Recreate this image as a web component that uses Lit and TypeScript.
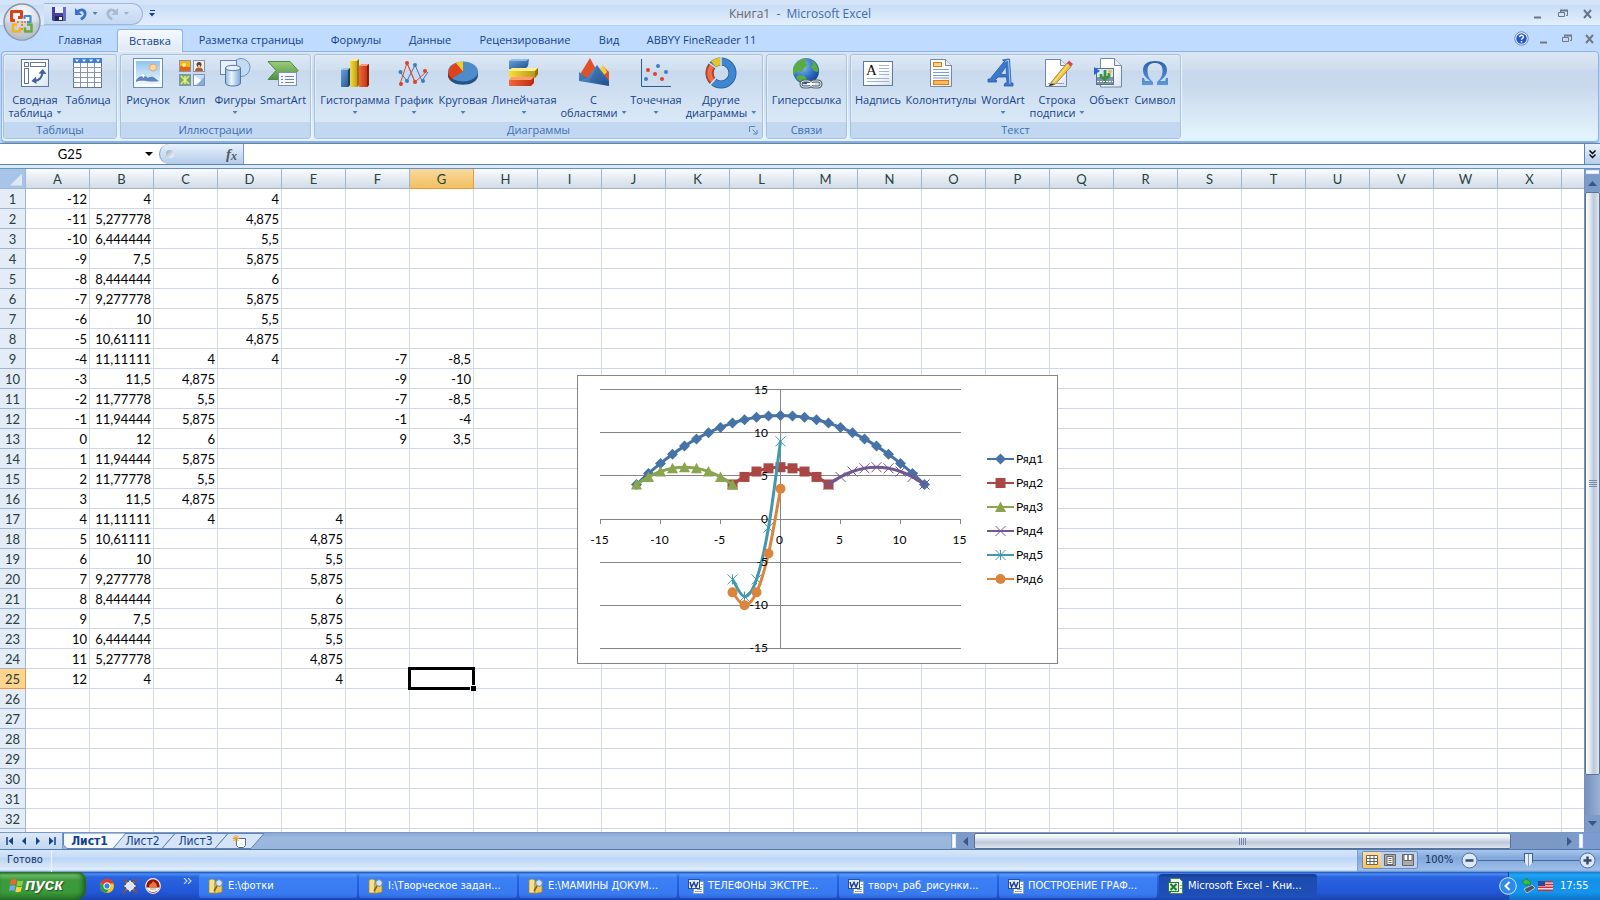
import { LitElement, html, css, svg, nothing } from "lit";
import { customElement } from "lit/decorators.js";
import { classMap } from "lit/directives/class-map.js";

type Point = [number, number];

/* The trailing blank column and row carry the grid on to the scroll bars. */
const COLUMNS = [..."ABCDEFGHIJKLMNOPQRSTUVWX".split(""), ""];
const ROWS: (number | "")[] = [...Array.from({ length: 32 }, (_, i) => i + 1), ""];
const ACTIVE = { col: "G", row: 25 };

const span = (from: number, to: number) =>
  Array.from({ length: to - from + 1 }, (_, i) => from + i);

const bigArc = span(-12, 12).map((x): Point => [x, 12 - (x * x) / 18]);
const smallArc = (centre: number) =>
  span(centre - 4, centre + 4).map((x): Point => [x, 6 - (x - centre) ** 2 / 8]);
const handle1 = [-7, -9, -7, -1, 9];
const handle2 = [-8.5, -10, -8.5, -4, 3.5];

const cells = new Map<string, string>();
const put = (col: string, firstRow: number, values: number[]) =>
  values.forEach((v, i) =>
    cells.set(col + (firstRow + i), String(Number(v.toPrecision(7))).replace(".", ","))
  );
put("A", 1, bigArc.map((p) => p[0]));
put("B", 1, bigArc.map((p) => p[1]));
put("C", 9, smallArc(0).map((p) => p[1]));
put("D", 1, smallArc(-8).map((p) => p[1]));
put("E", 17, smallArc(8).map((p) => p[1]));
put("F", 9, handle1);
put("G", 9, handle2);

const series = [
  { name: "Ряд1", color: "#4572a7", marker: "diamond", points: bigArc },
  { name: "Ряд2", color: "#aa4643", marker: "square", points: smallArc(0) },
  { name: "Ряд3", color: "#89a54e", marker: "triangle", points: smallArc(-8) },
  { name: "Ряд4", color: "#71588f", marker: "cross", points: smallArc(8) },
  { name: "Ряд5", color: "#4198af", marker: "star", points: handle1.map((y, i): Point => [i - 4, y]) },
  { name: "Ряд6", color: "#db843d", marker: "circle", points: handle2.map((y, i): Point => [i - 4, y]) },
];

/* ---------- icons ---------- */

const defs = svg`<defs>
  <linearGradient id="bl" x1="0" y1="0" x2="1" y2="1"><stop offset="0" stop-color="#6ba6dc"/><stop offset="1" stop-color="#1f4f8f"/></linearGradient>
  <linearGradient id="ye" x1="0" y1="0" x2="1" y2="0"><stop offset="0" stop-color="#f7df3c"/><stop offset="1" stop-color="#b58d10"/></linearGradient>
  <linearGradient id="rd" x1="0" y1="0" x2="1" y2="0"><stop offset="0" stop-color="#f4673a"/><stop offset="1" stop-color="#b82c0c"/></linearGradient>
  <linearGradient id="cy" x1="0" y1="0" x2="1" y2="0"><stop offset="0" stop-color="#8db6e2"/><stop offset=".4" stop-color="#eef6fd"/><stop offset="1" stop-color="#7ba6d6"/></linearGradient>
  <linearGradient id="sk" x1="0" y1="0" x2="0" y2="1"><stop offset="0" stop-color="#8fc4ef"/><stop offset="1" stop-color="#eaf5fd"/></linearGradient>
  <linearGradient id="gr" x1="0" y1="0" x2="0" y2="1"><stop offset="0" stop-color="#9ccc7c"/><stop offset="1" stop-color="#4f9140"/></linearGradient>
  <linearGradient id="om" x1="0" y1="0" x2="0" y2="1"><stop offset="0" stop-color="#2d62ad"/><stop offset="1" stop-color="#5c97dc"/></linearGradient>
  <radialGradient id="gl" cx=".35" cy=".3" r=".8"><stop offset="0" stop-color="#8fc5f5"/><stop offset=".6" stop-color="#2c6cc4"/><stop offset="1" stop-color="#123a86"/></radialGradient>
  <linearGradient id="pg" x1="0" y1="0" x2="1" y2="1"><stop offset=".5" stop-color="#fff"/><stop offset="1" stop-color="#d6e2f0"/></linearGradient>
</defs>`;

const page = svg`<path d="M7.5 1.500h14l7 7v21.500h-21z" fill="url(#pg)" stroke="#7388a5"/><path d="M21.500 1.500v7h7" fill="#e5eef8" stroke="#7388a5"/>`;

const icons: Record<string, unknown> = {
  pivot: svg`<rect x="2.500" y="2.500" width="27" height="27" fill="url(#pg)" stroke="#60789b"/>
    <rect x="5.500" y="5.500" width="4" height="4" fill="#fff" stroke="#60789b"/><rect x="11.500" y="5.500" width="15" height="4" fill="#fff" stroke="#60789b"/><rect x="5.500" y="11.500" width="4" height="15" fill="#fff" stroke="#60789b"/>
    <path d="M14 23.500c6 1 9-3 9.500-8" fill="none" stroke="#3b62a0" stroke-width="2.200"/><path d="M19.500 16.500l4.200-4.500 3.800 5zM17 19.500l-4.500 4.500 5 3z" fill="#3b62a0"/>`,
  table: svg`<rect x="1.500" y="1.500" width="28" height="29" fill="#fff" stroke="#5f7699"/><path d="M1 1h29v5H1z" fill="#3f7fd6"/>
    <path d="M3 2.500h4l-2 2.500zM10 2.500h4l-2 2.500zM17 2.500h4l-2 2.500zM24 2.500h4l-2 2.500z" fill="#fff"/>
    <path d="M1 10.500h29M1 15.500h29M1 20.500h29M1 25.500h29M8.500 6v24M15.500 6v24M22.500 6v24" stroke="#8596ae" fill="none"/>`,
  picture: svg`<rect x="1.500" y="1.500" width="29" height="29" fill="#f8fbff" stroke="#6c8eb5"/><rect x="4" y="4" width="24" height="22" fill="url(#sk)"/>
    <circle cx="21" cy="10.500" r="3.500" fill="#ffd9a8" stroke="#f59d51"/><path d="M4 23l7-7 5 5 3-3 9 7v1H4z" fill="#5a86bd"/><path d="M11 16l-4 4 3-1 1.500 2 1-2 2 1zM19 18l-2 2 3-.5 2 1z" fill="#fff"/><path d="M4 25c6-3 14 1 24-1v3H4z" fill="#eaf3fb"/>`,
  clip: svg`<g stroke="#8195b2"><rect x="3.500" y="3.500" width="11" height="11" fill="#f9b11c"/><rect x="17.500" y="3.500" width="11" height="11" fill="#f3ede4"/><rect x="3.500" y="17.500" width="11" height="11" fill="#69ad72"/><rect x="17.500" y="17.500" width="11" height="11" fill="#c9dcf6"/></g>
    <path d="M4 10c4-3 7 1 10 0v4H4z" fill="#e4650f"/><circle cx="8" cy="8" r="2" fill="#fff07b"/><circle cx="23" cy="7.500" r="2.500" fill="#5b4436"/><path d="M19 14c0-5 8-5 8 0z" fill="#b55b36"/><path d="M23 8v3" stroke="#e8b78f" stroke-width="2"/>
    <path d="M5 19l8 8M13 19l-8 8M9 19v8" stroke="#f5ea79" stroke-width="1.500"/><path d="M18 18l8 6-8 4z" fill="#fff"/><path d="M21 28l7-8v8z" fill="#86a9df"/>`,
  shapes: svg`<circle cx="22" cy="10.500" r="9" fill="#c3daf3" stroke="#6e93c2"/><rect x="1.500" y="3.500" width="16" height="14" fill="#e7f1fb" stroke="#6983ab"/>
    <path d="M6.500 11v15c0 4 15 4 15 0V11z" fill="url(#cy)" stroke="#54779f"/><ellipse cx="14" cy="11" rx="7.500" ry="2.700" fill="#e4f0fb" stroke="#54779f"/>`,
  smartart: svg`<path d="M1 4.500h22l8 9-8 9H1l8-9z" fill="url(#gr)" stroke="#4d8b43"/><rect x="11.500" y="15.500" width="18" height="13" fill="#f4f8fc" stroke="#8294ac"/><path d="M14 19.500h2M18 19.500h9M14 22.500h2M18 22.500h9M14 25.500h2M18 25.500h9" stroke="#6f86a5"/>`,
  column: svg`<path d="M2 13l3-2h6v17l-2 2H2z" fill="url(#bl)"/><path d="M2 13l3-2h6l-2 2z" fill="#9bc6ea"/><path d="M20 9l3-2h7v21l-2 2h-8z" fill="url(#rd)"/><path d="M20 9l3-2h7l-2 2z" fill="#ff9a76"/>
    <path d="M11 4l3-2h6v26l-2 2h-7z" fill="url(#ye)"/><path d="M11 4l3-2h6l-2 2z" fill="#fff08c"/><path d="M18 4l2-2v26l-2 2z" fill="#96720a"/><path d="M28 9l2-2v21l-2 2z" fill="#8f1d04"/><path d="M9 13l2-2v17l-2 2z" fill="#173e70"/>`,
  line: svg`<path d="M2 15l7 9 8-16 7 16 6-9" fill="none" stroke="#3b73b6"/><path d="M2 27L9 6l8 19 12-11" fill="none" stroke="#d9502f"/><path d="M9 6l8 19" stroke="#d9502f"/>
    <g fill="#3d7cc3"><circle cx="2.500" cy="15" r="2"/><circle cx="9" cy="24" r="2"/><circle cx="17" cy="8" r="2"/><circle cx="25" cy="24" r="2"/></g><g fill="#dc4322"><circle cx="3" cy="27" r="2"/><circle cx="9" cy="6" r="2"/><circle cx="17" cy="25" r="2"/><circle cx="27" cy="14" r="2"/></g>`,
  pie: svg`<path d="M1 14v4c0 13 30 13 30 0v-4z" fill="#245487"/><ellipse cx="16" cy="14.500" rx="15" ry="10" fill="#4d8bc9"/><path d="M16 14.500V5C4 5-3 14 5 21.500z" fill="#e0431c"/><path d="M1 14v4c0 3 2 5 4 6v-3c-3-2-4-4-4-7z" fill="#9c2709"/><path d="M16 14.500V4.500c-3 0-5 .5-7 1.500z" fill="#f3cf25"/>`,
  bar: svg`<path d="M1 4l3-2h17l-1 7-3 3H1z" fill="url(#bl)"/><path d="M1 4l3-2h17l-3 2z" fill="#8fbde6"/><path d="M1 14l3-3h26v6l-3 4H1z" fill="url(#ye)"/><path d="M1 14l3-3h26l-3 3z" fill="#fff08c"/><path d="M27 14l3-3v6l-3 4z" fill="#93700a"/><path d="M1 23l3-3h22v6l-3 3H1z" fill="url(#rd)"/><path d="M1 23l3-3h22l-3 3z" fill="#ff9a76"/>`,
  area: svg`<path d="M1 19L12 1l8 15 6-6 5 5v13L1 23z" fill="#e0512a"/><path d="M22 12l3-4 4 7-3 3z" fill="#f2d131"/><path d="M1 15l8 6L19 8l12 16v5L1 24z" fill="url(#bl)"/><path d="M1 15v9l8-3zM19 8l-7 16 19 5z" fill="#215490" opacity=".35"/>`,
  scatter: svg`<path d="M1.500 2v27.500H31" fill="none" stroke="#2f5b93"/><g fill="#3f7cc0"><circle cx="6" cy="22" r="2"/><circle cx="18" cy="9" r="2"/><circle cx="26" cy="15" r="2"/></g><g fill="#dd4424"><circle cx="8" cy="13" r="2"/><circle cx="15" cy="17" r="2"/><circle cx="22" cy="22" r="2"/></g>`,
  donut: svg`<circle cx="16" cy="16" r="11.500" fill="none" stroke="#245892" stroke-width="8"/><circle cx="16" cy="16" r="11.500" fill="none" stroke="#3e86cf" stroke-width="6.500"/><path d="M8.200 24.500A11.500 11.500 0 0 1 7 9" fill="none" stroke="#c93a17" stroke-width="7.500"/><path d="M8.200 24.500A11.500 11.500 0 0 1 7 9" fill="none" stroke="#ef6d48" stroke-width="4.500"/><path d="M8.500 7.200A11.500 11.500 0 0 1 15.500 4.500" fill="none" stroke="#e8c421" stroke-width="7.500"/><path d="M4 6l7 5M16 0v9M5 28l6-7" stroke="#d5e2f2" stroke-width="1.500"/>`,
  link: svg`<circle cx="15" cy="14" r="13" fill="url(#gl)"/><path d="M4 8c3-5 9-7 12-6l-2 4 3 2-4 3-2 4-5-1-3 4c-2-4-1-8 1-10zM20 3c5 2 8 8 7 12l-4-1-3-4 2-3zM8 18l6 1 2 4-4 3c-4-1-6-4-7-6z" fill="#58ad3f"/>
    <g fill="none"><rect x="10" y="24" width="10" height="6" rx="3" stroke="#58616e" stroke-width="3"/><rect x="20" y="24" width="10" height="6" rx="3" stroke="#58616e" stroke-width="3"/><rect x="10" y="24" width="10" height="6" rx="3" stroke="#e3e8ee"/><rect x="20" y="24" width="10" height="6" rx="3" stroke="#e3e8ee"/><path d="M16 27h8" stroke="#fff" stroke-width="2"/></g>`,
  textbox: svg`<rect x="1.500" y="4.500" width="29" height="24" fill="url(#pg)" stroke="#64799a"/><text x="4" y="18" font-family="Liberation Serif, serif" font-size="15" fill="#111">A</text><path d="M17 8.500h10M17 11.500h10M17 14.500h10M17 17.500h10M5 21.500h22M5 24.500h22" stroke="#a3b4cf"/>`,
  header: svg`<path d="M5.500 2.500h15l6 6v21h-21z" fill="url(#pg)" stroke="#7388a5"/><path d="M20.500 2.500v6h6" fill="#e5eef8" stroke="#7388a5"/><rect x="8.500" y="5.500" width="8" height="4" fill="#ffd28e" stroke="#e27a12"/><rect x="8.500" y="23.500" width="15" height="4" fill="#ffb95c" stroke="#e27a12"/><path d="M8 12.500h16M8 15.500h16M8 18.500h16M8 21h16" stroke="#7f9cd0"/>`,
  wordart: svg`<path d="M1 22h2L17.500 4l-2-1 5.500-1h1.500l1.500 24h2v3h-9l1-3h2l-.5-6h-8L7.500 23h2v2H1zM13.500 17.500h6L19 9.500z" fill="#3a78cc" stroke="#2a5ca6" stroke-width=".8"/><path d="M18.500 4.500l3-1.500 1.500 24" fill="none" stroke="#a9cdf6"/>`,
  sign: svg`<path d="M4.500 2.500h15l6 6v21h-21z" fill="url(#pg)" stroke="#7388a5"/><path d="M19.500 2.500v6h6" fill="#e5eef8" stroke="#7388a5"/><path d="M10 25.500L26 6l4 3.500-16 18-6 1.500z" fill="#f3c443" stroke="#9b7420" stroke-width=".8"/><path d="M26 6l2-2.500 4 3.500-2 2.500z" fill="#d6455a"/><path d="M10.500 25.500l-2.500 3.500 5-1.500z" fill="#222"/><path d="M12 26L27.500 7.500" stroke="#ffe99c"/><path d="M7 26.500h16" stroke="#8fa2bd"/>`,
  object: svg`${page}<rect x="3.500" y="11.500" width="17" height="16" fill="#dbe9f5" stroke="#56728f"/><path d="M4 20h16v7H4z" fill="#7f93a7"/><path d="M1 10l6 4-6 4z" fill="#2d62d2"/><path d="M12 13v13M8 17v3l4 2 4-3v-3" fill="none" stroke="#3b9240" stroke-width="2.800"/><circle cx="17" cy="14.500" r="2" fill="#e4c15d"/><path d="M4 24.500h16" stroke="#fff" stroke-dasharray="2 1"/>`,
  omega: svg`<path d="M3 28v-7h2l1 3h5c-4-3-7-6-7-11C4 7 9 4 16 4s12 3 12 9c0 5-3 8-7 11h5l1-3h2v7H18v-3c4-3 5.500-7 5.500-12 0-4.500-3-7-7.500-7S8.500 8.500 8.500 13c0 5 1.500 9 5.500 12v3z" fill="url(#om)"/>`,
};

const icon = (name: string) =>
  html`<svg class="ico" viewBox="0 0 32 32" aria-hidden="true">${defs}${icons[name]}</svg>`;

interface Tool { icon: string; lines: string[]; menu?: boolean }
const groups: { cls: string; title: string; launcher?: boolean; tools: Tool[] }[] = [
  { cls: "g-tables", title: "Таблицы", tools: [
    { icon: "pivot", lines: ["Сводная", "таблица"], menu: true },
    { icon: "table", lines: ["Таблица"] } ] },
  { cls: "g-pics", title: "Иллюстрации", tools: [
    { icon: "picture", lines: ["Рисунок"] },
    { icon: "clip", lines: ["Клип"] },
    { icon: "shapes", lines: ["Фигуры"], menu: true },
    { icon: "smartart", lines: ["SmartArt"] } ] },
  { cls: "g-charts", title: "Диаграммы", launcher: true, tools: [
    { icon: "column", lines: ["Гистограмма"], menu: true },
    { icon: "line", lines: ["График"], menu: true },
    { icon: "pie", lines: ["Круговая"], menu: true },
    { icon: "bar", lines: ["Линейчатая"], menu: true },
    { icon: "area", lines: ["С", "областями"], menu: true },
    { icon: "scatter", lines: ["Точечная"], menu: true },
    { icon: "donut", lines: ["Другие", "диаграммы"], menu: true } ] },
  { cls: "g-links", title: "Связи", tools: [{ icon: "link", lines: ["Гиперссылка"] }] },
  { cls: "g-text", title: "Текст", tools: [
    { icon: "textbox", lines: ["Надпись"] },
    { icon: "header", lines: ["Колонтитулы"] },
    { icon: "wordart", lines: ["WordArt"], menu: true },
    { icon: "sign", lines: ["Строка", "подписи"], menu: true },
    { icon: "object", lines: ["Объект"] },
    { icon: "omega", lines: ["Символ"] } ] },
];

const uiFont = css`"Open Sans", "Noto Sans", sans-serif`;
const cellFont = css`Lato, "Open Sans", sans-serif`;
const sysFont = css`"DejaVu Sans Condensed", "DejaVu Sans", sans-serif`;

const reset = css`
  *, *::before, *::after { box-sizing: border-box; }
  button, input { font: inherit; color: inherit; border: 0; margin: 0; padding: 0; background: none; border-radius: 0; outline: none; }
  button { display: flex; align-items: center; justify-content: center; white-space: nowrap; }
  svg { display: block; flex: none; }
`;

/* ---------- title bar and ribbon ---------- */

@customElement("excel-ribbon")
export class ExcelRibbon extends LitElement {
  static styles = [reset, css`
    :host { display: block; position: relative; font: 11px/14px ${uiFont}; color: #15428b; background: #bfdbff; }
    .title { height: 26px; display: grid; grid-template-columns: 1fr auto 1fr; align-items: center; padding-top: 2px;
      background: linear-gradient(#d5e4f8 0 5px, #c8dcf6 5px, #e3effd 25px); border-bottom: 1px solid #b0d2ef; }
    .quick { display: flex; align-items: center; padding-left: 44px; }
    .qat { display: flex; align-items: center; width: 99px; height: 22px; padding-left: 7px;
      border: 1px solid #9db8dc; border-left: 0; border-radius: 0 11px 11px 0; background: linear-gradient(#dbe8f9, #c4d8f2); }
    .qat button { height: 16px; }
    .q16 { width: 16px; } .q12 { width: 12px; }
    .qat .q16 + .q16 { margin-left: 6px; }
    .qat .q12 + .q16 { margin-left: 3px; }
    .custom { margin-left: 3px; width: 12px; }
    .name { font-size: 12px; line-height: 18px; padding-top: 1px; color: #3e6aaa; white-space: pre; }
    .book { color: #696969; }
    .win { display: flex; justify-content: flex-end; gap: 9px; padding-right: 4px; }
    .win button { width: 16px; height: 16px; }
    .tabs { height: 25px; display: flex; justify-content: space-between; }
    .tablist { display: grid; grid-template-columns: 70px 70px 132px 78px 70px 120px 48px 137px; padding-left: 45px; }
    .tab { height: 22px; align-self: end; }
    .tab.on { margin: 0 2px -1px; height: 23px; border: 1px solid #8db2e3; border-bottom: 0; border-radius: 3px 3px 0 0;
      background: linear-gradient(#f4f9ff, #dfe9f5); box-shadow: 0 0 2px #fff inset; z-index: 1; }
    .tabs .win { align-items: center; gap: 7px; padding-right: 2px; }
    .panel { height: 91px; margin: 0 1px; padding: 2px 1px; display: flex; gap: 3px; border: 1px solid #8db2e3; border-radius: 4px;
      background: linear-gradient(#dbe6f4, #cfddec 17px, #c8d8ee 18px, #c9d9ec 35px, #e3f4fd 85px, #d9f3ff); box-shadow: 0 1px 1px #8aa5c8; }
    .group { flex: none; display: flex; flex-direction: column; border: 1px solid #a6c1dd; border-radius: 3px; box-shadow: 1px 1px 0 #eef7ff, inset 1px 1px 0 #e3edf8; overflow: hidden;
      background: linear-gradient(#dde8f5, #d0deee 15px, #c8d9ee 16px, #d9e8f6 66px); }
    .tools { flex: 1; display: grid; align-items: start; padding: 2px 2px 0; justify-content: start; }
    .g-tables { width: 114px; } .g-tables .tools { grid-template-columns: 58px 48px; }
    .g-pics { width: 191px; } .g-pics .tools { grid-template-columns: 50px 38px 48px 48px; }
    .g-charts { width: 449px; } .g-charts .tools { grid-template-columns: 76px 42px 56px 66px 73px 52px 78px; }
    .g-links { width: 81px; } .g-links .tools { grid-template-columns: 75px; }
    .g-text { width: 331px; } .g-text .tools { grid-template-columns: 50px 76px 48px 60px 44px 48px; }
    .tool { flex-direction: column; line-height: 13px; min-width: 0; }
    .ico { width: 32px; height: 32px; margin-bottom: 4px; }
    .line { display: flex; align-items: center; height: 13px; gap: 4px; }
    .down { width: 5px; height: 3px; background: #4f7fb8; clip-path: polygon(0 0, 100% 0, 50% 100%); }
    .cap { height: 16px; display: flex; align-items: center; justify-content: center; position: relative; color: #3e6db5; background: #c1d8f0; }
    .launch { position: absolute; right: 3px; top: 2px; width: 12px; height: 12px; }
    .orb { position: absolute; left: 3px; top: 3px; width: 38px; height: 38px; z-index: 2; }
  `];

  private windowButtons(color: string) {
    return html`
      <button aria-label="Свернуть"><svg width="16" height="16"><path d="M4 11.500h7" stroke=${color} stroke-width="2"/></svg></button>
      <button aria-label="Восстановить"><svg width="16" height="16" fill="none" stroke=${color}><path d="M5.500 6V4.500h7v5H11"/><path d="M5 4.500h8" stroke-width="2"/><path d="M3.500 6.500h6v4h-6z"/></svg></button>
      <button aria-label="Закрыть"><svg width="16" height="16"><path d="M4 4l7 8M11 4l-7 8" stroke=${color} stroke-width="2"/></svg></button>`;
  }

  render() {
    const tabs = ["Главная", "Вставка", "Разметка страницы", "Формулы", "Данные", "Рецензирование", "Вид", "ABBYY FineReader 11"];
    return html`
      <button class="orb" aria-label="Office">
        <svg width="38" height="38" viewBox="0 0 38 38">
          <defs><radialGradient id="o" cx=".5" cy=".3" r=".7"><stop offset="0" stop-color="#fff"/><stop offset=".6" stop-color="#dbe0e8"/><stop offset="1" stop-color="#a9b3c2"/></radialGradient></defs>
          <circle cx="19" cy="19" r="18" fill="url(#o)" stroke="#8795ab" stroke-width="1.500"/>
          <path d="M2 20a17 17 0 0 0 34 0c-10-3-24-3-34 0z" fill="#b9c2cf" opacity=".5"/>
          <g fill="none" stroke-linejoin="round">
            <path d="M12 17.500H8.500V8.500H18.500V14.500H15" stroke="#d8441a" stroke-width="3"/>
            <path d="M21.500 16v-3h6v6h-3.500" stroke="#3f8ad0" stroke-width="2.200"/>
            <path d="M14 21.500h-4v7h7v-4" stroke="#f6b21b" stroke-width="2.500"/>
            <path d="M24 21.500h4.500v7h-6.500v-4" stroke="#69a93a" stroke-width="2.500"/>
          </g>
          <g fill="#e8862e"><path d="M14 18h2v2h-2zM18 18h2v2h-2zM18 21h2v2h-2zM21 18h2v2h-2zM18 25h2v2h-2z"/></g>
        </svg>
      </button>
      <div class="title">
        <div class="quick">
          <div class="qat">
            <button class="q16" aria-label="Сохранить"><svg width="14" height="14" viewBox="0 0 14 14"><path d="M0 0h14v14H1l-1-1z" fill="#4440a0"/><path d="M3 0h8v6H3z" fill="#e8edf8"/><path d="M11 0h3v14h-3z" fill="#6a6ac6"/><path d="M3 9h8v5H3z" fill="#26235e"/><path d="M7 10h3v3H7z" fill="#fff"/></svg></button>
            <button class="q16" aria-label="Отменить"><svg width="14" height="14" viewBox="0 0 14 14"><path d="M3 5c4-4 9-2 8 3-.5 2-2 3-4 4.500" fill="none" stroke="#3b70cc" stroke-width="2.800"/><path d="M1 1v7h7z" fill="#3b70cc"/></svg></button>
            <button class="q12" aria-label="Список отмены"><span class="down"></span></button>
            <button class="q16" aria-label="Вернуть"><svg width="14" height="14" viewBox="0 0 14 14"><path d="M11 5C7 1 2 3 3 8c.5 2 2 3 4 4.500" fill="none" stroke="#a9bad3" stroke-width="2.800"/><path d="M13 1v7H6z" fill="#a9bad3"/></svg></button>
            <button class="q12" aria-label="Список возврата"><svg width="5" height="3"><path d="M0 0h5L2.500 3z" fill="#9fb0c9"/></svg></button>
          </div>
          <button class="custom" aria-label="Настройка панели"><svg width="7" height="7"><path d="M1 .5h5" stroke="#15428b"/><path d="M0 3h6L3 6.500z" fill="#15428b"/></svg></button>
        </div>
        <div class="name"><span class="book">Книга1</span>  -  Microsoft Excel</div>
        <div class="win">${this.windowButtons("#6a7587")}</div>
      </div>
      <div class="tabs">
        <div class="tablist" role="tablist">
          ${tabs.map((t, i) => html`<button role="tab" class=${classMap({ tab: true, on: i === 1 })}>${t}</button>`)}
        </div>
        <div class="win">
          <button aria-label="Справка"><svg width="15" height="15" viewBox="0 0 15 15"><circle cx="7.500" cy="7.500" r="6.700" fill="#fff" stroke="#5c86be"/><circle cx="7.500" cy="7.500" r="5.300" fill="#2458d0"/><path d="M5.600 6.200c0-2.600 4-2.400 3.800-.2 0 1.200-1.900 1.300-1.900 2.800M7.500 10v1.400" fill="none" stroke="#fff" stroke-width="1.400"/></svg></button>
          ${this.windowButtons("#727983")}
        </div>
      </div>
      <div class="panel">
        ${groups.map((g) => html`
          <section class="group ${g.cls}">
            <div class="tools">
              ${g.tools.map((t) => html`
                <button class="tool">
                  ${icon(t.icon)}
                  <span class="line">${t.lines[0]}</span>
                  <span class="line">${t.lines[1] ?? nothing}${t.menu ? html`<span class="down"></span>` : nothing}</span>
                </button>`)}
            </div>
            <div class="cap">${g.title}
              ${g.launcher ? html`<button class="launch" aria-label="Параметры диаграмм"><svg width="9" height="9" fill="none" stroke="#5d86b8"><path d="M.5 6V.5H6M3.500 3.500l4 4M8 4v4H4"/></svg></button>` : nothing}
            </div>
          </section>`)}
      </div>`;
  }
}

/* ---------- chart ---------- */

@customElement("sheet-chart")
export class SheetChart extends LitElement {
  static styles = [reset, css`
    :host { display: block; }
    .chart { background: #fff; font: 12px ${cellFont}; }
    text { fill: #000; }
  `];

  private px([x, y]: Point): Point {
    return [203.5 + x * 12, 144 - y * 8.63];
  }

  private curve(points: Point[]) {
    const p = points.map((q) => this.px(q));
    let d = `M${p[0]}`;
    for (let i = 0; i < p.length - 1; i++) {
      const a = p[Math.max(i - 1, 0)], b = p[i], c = p[i + 1], e = p[Math.min(i + 2, p.length - 1)];
      d += `C${b[0] + (c[0] - a[0]) / 6},${b[1] + (c[1] - a[1]) / 6} ${c[0] - (e[0] - b[0]) / 6},${c[1] - (e[1] - b[1]) / 6} ${c}`;
    }
    return d;
  }

  private marker(kind: string, color: string, [x, y]: Point) {
    const shapes: Record<string, string> = {
      diamond: "M0-5.500L5.500 0 0 5.500-5.500 0z",
      square: "M-5-5h10v10h-10z",
      triangle: "M0-5.500L5.500 5H-5.500z",
      cross: "M-5-5l10 10M5-5l-10 10",
      star: "M-5-5l10 10M5-5l-10 10M0-5V5",
      circle: "M-5 0a5 5 0 1 0 10 0a5 5 0 1 0-10 0",
    };
    const open = kind === "cross" || kind === "star";
    return svg`<path d=${shapes[kind]} transform="translate(${x} ${y})" fill=${open ? "none" : color} stroke=${open ? color : "none"}/>`;
  }

  render() {
    const ticks = [-15, -10, -5, 0, 5, 10, 15];
    return html`
      <svg class="chart" width="481" height="289" role="img" aria-label="Диаграмма">
        <rect x=".5" y=".5" width="480" height="288" fill="none" stroke="#868686"/>
        <g stroke="#868686" shape-rendering="crispEdges">
          ${ticks.map((t) => svg`<path d="M23 ${this.px([0, t])[1]}H384"/>`)}
          ${ticks.map((t) => svg`<path d="M${this.px([t, 0])[0]} 144v5"/>`)}
          <path d="M203.500 14V274"/>
        </g>
        ${series.map((s) => svg`
          <path d=${this.curve(s.points)} fill="none" stroke=${s.color} stroke-width="3"/>
          ${s.points.map((p) => this.marker(s.marker, s.color, this.px(p)))}`)}
        ${ticks.map((t) => svg`<text x="191" y=${this.px([0, t])[1] + 4} text-anchor="end">${t}</text>`)}
        ${ticks.map((t) => svg`<text x=${this.px([t, 0])[0] - 1} y="169" text-anchor="middle">${t}</text>`)}
        ${series.map((s, i) => svg`
          <path d="M410 ${84 + i * 24}h27" stroke=${s.color} stroke-width="2"/>
          ${this.marker(s.marker, s.color, [423.5, 84 + i * 24])}
          <text x="439" y=${88 + i * 24}>${s.name}</text>`)}
      </svg>`;
  }
}

/* ---------- sheet ---------- */

@customElement("excel-sheet")
export class ExcelSheet extends LitElement {
  static styles = [reset, css`
    :host { display: grid; grid-template: minmax(0, 1fr) 18px / minmax(0, 1fr) 16px; min-height: 0; }
    .view { position: relative; overflow: hidden; background: #fff; }
    .grid { table-layout: fixed; width: 1626px; border-collapse: separate; border-spacing: 0; font: 13px/18px ${cellFont}; color: #000; }
    .rowcol { width: 26px; }
    th, td { height: 20px; padding: 1px 2px 0; white-space: nowrap; border: solid #d0d7e5; border-width: 0 1px 1px 0; }
    td { text-align: right; position: relative; }
    th { font-weight: 400; text-align: center; color: #27413e; border-color: #9eb6ce; }
    thead th { background: linear-gradient(#f9fcfd, #d3dbe9); }
    tbody th { background: #e4ecf7; }
    thead .on { background: linear-gradient(#f9d99f, #f1c15f); border-color: #f29536; }
    tbody .on { background: #ffd58d; border-color: #f29536; }
    thead .corner { background: #a9c4e9; padding: 0; }
    .corner i { display: block; width: 12px; height: 12px; margin: 2px 0 0 10px; background: #dfe8f5; clip-path: polygon(100% 0, 100% 100%, 0 100%); }
    .sel { position: absolute; inset: -2px; border: 3px solid #000; z-index: 1; }
    .sel::after { content: ""; position: absolute; right: -4px; bottom: -4px; width: 6px; height: 6px; background: #000; border: solid #fff; border-width: 1px 0 0 1px; }
    .float { position: absolute; left: 577px; top: 206px; z-index: 2; }
    .vbar { display: flex; flex-direction: column; border-left: 1px solid #7792b8; background: linear-gradient(90deg, #8fa9d0, #a6bfe3); }
    .vbar button, .hbar button { flex: none; background: #7d9bc8; }
    .vbar .split-h { height: 6px; background: #fff; border: 1px solid #7fa0cd; box-shadow: inset 0 0 0 1px #dfeaf8; }
    .vbar .arrow { height: 17px; }
    .vthumb { flex: 583; border: 1px solid #5c7196; border-radius: 2px; background: linear-gradient(90deg, #fff, #e3e9f1 30%, #bcc9db 60%, #dfe6ef); display: grid; place-items: center; }
    .vrest { flex: 40; background: linear-gradient(90deg, #7591bd, #98b1d6); }
    .bottom { grid-column: 1 / -1; display: flex; align-items: stretch; min-width: 0; border-top: 1px solid #7a98c5; border-bottom: 1px solid #4f78ae; background: linear-gradient(#8aa8d4, #9db8df 30%, #9ab5dc); font: 12px/14px ${sysFont}; color: #15428b; }
    .nav { display: flex; width: 63px; background: linear-gradient(#dbe8f8, #c3d7f1); padding-left: 3px; border-right: 1px solid #7a98c5; }
    .nav button { width: 14px; }
    .left { flex: 1; display: flex; min-width: 0; }
    .tab { position: relative; width: 53px; z-index: 0; }
    .tab svg { position: absolute; left: -7px; top: 0; z-index: -1; }
    .tab.on { font-weight: 700; z-index: 1; }
    .tab.on svg { left: 0; }
    .tab.add { width: 34px; }
    .tab .new { position: static; z-index: 0; }
    .hbar { flex: none; width: 649px; display: flex; }
    .hbar .split-v { width: 6px; background: #fff; border: 1px solid #7fa0cd; box-shadow: inset 0 0 0 1px #dfeaf8; }
    .hbar .arrow { width: 17px; }
    .hthumb { flex: 537; border: 1px solid #5c7196; border-radius: 2px; background: linear-gradient(#fff, #e3e9f1 30%, #bcc9db 60%, #dfe6ef); display: grid; place-items: center; }
    .hrest { flex: 50; background: #7c99c5; }
    .end { width: 16px; background: #7c9bd0; }
  `];

  private tabShape(w: number, on = false) {
    return html`<svg width=${w + 14} height="16" aria-hidden="true"><path d=${on ? `M.5 0H${w + 13}L${w} 15.500H4L.5 12z` : `M13 .5H${w + 13}L${w} 15.500H0z`} fill=${on ? "#f4f9ff" : "#d5e4f7"} stroke="#5f82b5"/></svg>`;
  }

  render() {
    return html`
      <div class="view">
        <table class="grid">
          <colgroup><col class="rowcol">${COLUMNS.map(() => html`<col>`)}</colgroup>
          <thead><tr>
            <th class="corner"><i></i></th>
            ${COLUMNS.map((c) => html`<th scope="col" class=${classMap({ on: c === ACTIVE.col })}>${c}</th>`)}
          </tr></thead>
          <tbody>
            ${ROWS.map((r) => html`<tr>
              <th scope="row" class=${classMap({ on: r === ACTIVE.row })}>${r}</th>
              ${COLUMNS.map((c) => html`<td>${cells.get(c + r) ?? nothing}${c === ACTIVE.col && r === ACTIVE.row ? html`<div class="sel"></div>` : nothing}</td>`)}
            </tr>`)}
          </tbody>
        </table>
        <sheet-chart class="float"></sheet-chart>
      </div>
      <div class="vbar">
        <button class="split-h" aria-label="Разделить"></button>
        <button class="arrow" aria-label="Вверх"><svg width="9" height="5"><path d="M0 5h9L4.500 0z" fill="#3f5682"/></svg></button>
        <div class="vthumb"><svg width="8" height="8"><path d="M0 .5h8M0 2.500h8M0 4.500h8M0 6.500h8" stroke="#7688a5"/></svg></div>
        <div class="vrest"></div>
        <button class="arrow" aria-label="Вниз"><svg width="9" height="5"><path d="M0 0h9L4.500 5z" fill="#3f5682"/></svg></button>
      </div>
      <div class="bottom">
        <div class="left">
          <div class="nav">
            <button aria-label="Первый лист"><svg width="8" height="8"><path d="M1 0v8" stroke="#15428b" stroke-width="1.500"/><path d="M7 0v8L2.500 4z" fill="#15428b"/></svg></button>
            <button aria-label="Предыдущий лист"><svg width="8" height="8"><path d="M6 0v8L2 4z" fill="#15428b"/></svg></button>
            <button aria-label="Следующий лист"><svg width="8" height="8"><path d="M2 0v8l4-4z" fill="#15428b"/></svg></button>
            <button aria-label="Последний лист"><svg width="8" height="8"><path d="M7 0v8" stroke="#15428b" stroke-width="1.500"/><path d="M1 0v8l4.500-4z" fill="#15428b"/></svg></button>
          </div>
          <button class="tab on">${this.tabShape(50, true)}Лист1</button>
          <button class="tab">${this.tabShape(53)}Лист2</button>
          <button class="tab">${this.tabShape(53)}Лист3</button>
          <button class="tab add" aria-label="Вставить лист">${this.tabShape(36)}
            <svg class="new" width="15" height="13" viewBox="0 0 15 13"><path d="M4.500 3.500h9v7l-2 2h-5l-2-2z" fill="#fff" stroke="#4c6d9c"/><path d="M4 0v7M.5 3.500h7M1.500 1l5 5M6.500 1l-5 5" stroke="#f09a1d"/></svg></button>
        </div>
        <div class="hbar">
          <button class="split-v" aria-label="Ширина полосы"></button>
          <button class="arrow" aria-label="Влево"><svg width="5" height="9"><path d="M5 0v9L0 4.500z" fill="#3f5682"/></svg></button>
          <div class="hthumb"><svg width="8" height="7"><path d="M.5 0v7M2.500 0v7M4.500 0v7M6.500 0v7" stroke="#7688a5"/></svg></div>
          <div class="hrest"></div>
          <button class="arrow" aria-label="Вправо"><svg width="5" height="9"><path d="M0 0v9l5-4.500z" fill="#3f5682"/></svg></button>
          <button class="split-v" aria-label="Граница"></button>
          <div class="end"></div>
        </div>
      </div>`;
  }
}

/* ---------- taskbar ---------- */

const folder = html`<svg width="16" height="16" viewBox="0 0 16 16"><path d="M1 2l3-1 3 1v13H1z" fill="#f6e08a" stroke="#a5832a" stroke-width=".7"/><path d="M7 4l7-1v11l-7 1.500z" fill="#edc94f" stroke="#a5832a" stroke-width=".7"/><circle cx="11" cy="5" r="3.300" fill="#cfe6fb" stroke="#708aa8"/><path d="M9 8l-3 5" stroke="#7c6130" stroke-width="1.500"/></svg>`;
const word = html`<svg width="16" height="16" viewBox="0 0 16 16"><path d="M5.500 3.500h10v12h-10z" fill="#fff" stroke="#8aa0c8"/><path d="M9 9.500h5M9 11.500h5M7 13.500h7M13 6.500h2" stroke="#7f9bd0"/><rect x=".5" y="1.500" width="11" height="9" fill="#e8effb" stroke="#2b4fa0"/><path d="M2 4l1.500 5L6 4.500 8 9l2-5" fill="none" stroke="#1f4296" stroke-width="1.500"/></svg>`;
const excel = html`<svg width="16" height="16" viewBox="0 0 16 16"><path d="M2.500.5h9l3 3v12h-12z" fill="#f5fbf3" stroke="#4a8a4e"/><rect x=".5" y="4.500" width="10" height="9" fill="#e0f2dd" stroke="#2c7a36"/><path d="M2.500 6l6 6M8.500 6l-6 6" stroke="#1e7a2c" stroke-width="2"/><path d="M12 7.500h2M12 10.500h2" stroke="#7db082"/></svg>`;

@customElement("xp-taskbar")
export class XpTaskbar extends LitElement {
  static styles = [reset, css`
    :host { display: flex; height: 28px; color: #fff; font: 11px/14px ${sysFont};
      background: linear-gradient(#1f51b8, #4a8df0 2px, #2a63e0 5px, #2257d8 20px, #1b45b0); }
    .start { width: 86px; gap: 1px; padding: 0 14px 2px 0; border-radius: 0 8px 10px 0; font: italic bold 17px/22px "Liberation Sans", sans-serif; text-shadow: 1px 1px 1px #245020;
      background: linear-gradient(#2d7a2d, #6fbf6b 3px, #3c9a3c 8px, #3a9a3a 20px, #2a7a2a); box-shadow: inset -3px 0 5px #1c5c1c; }
    .quick { width: 113px; display: flex; align-items: center; gap: 7px; padding-left: 13px; }
    .quick .more { margin: -10px 0 0 15px; }
    .tasks { flex: 1; display: flex; gap: 2px; padding: 2px 0; min-width: 0; }
    .task { width: 158px; justify-content: flex-start; gap: 4px; padding-left: 9px; border-radius: 3px; background: linear-gradient(#5e9bff, #3c80f5 4px, #387af0 20px, #2e68dc); }
    .task.on { background: linear-gradient(#153a90, #1d4bb0 4px, #1e50b8); }
    .tray { width: 92px; display: flex; align-items: center; gap: 3px; position: relative; padding-left: 12px;
      background: linear-gradient(#1a7ad0, #1da8f4 3px, #1290e8 8px, #1496ee 20px, #0f6fc4); border-left: 1px solid #0a4aa0; }
    .hide { position: absolute; left: -10px; top: 5px; }
    .clock { margin-left: 4px; }
  `];

  render() {
    const tasks: [unknown, string][] = [
      [folder, "E:\\фотки"], [folder, "I:\\Творческое задан..."], [folder, "E:\\МАМИНЫ ДОКУМ..."],
      [word, "ТЕЛЕФОНЫ ЭКСТРЕ..."], [word, "творч_раб_рисунки..."], [word, "ПОСТРОЕНИЕ ГРАФ..."], [excel, "Microsoft Excel - Кни..."],
    ];
    return html`
      <button class="start"><svg width="15" height="15" viewBox="0 0 15 15"><path d="M2 2c2-1.500 4-1 5.500 0L6.500 7C5 6 3 6 1 7z" fill="#f2652a"/><path d="M8.500 2.500c2 1 4 1 6 0l-1.500 5c-2 1-4 1-5.500 0z" fill="#8cd04a"/><path d="M1 8c2-1 4-1 5.500 0l-1.200 5C4 12 2 12 0 13z" fill="#6ea9f5"/><path d="M7.500 8.500c2 1 4 1 5.500 0l-1.300 5c-2 1-4 1-5.500 0z" fill="#fbd13c"/></svg>пуск</button>
      <div class="quick">
        <button aria-label="Chrome"><svg width="16" height="16" viewBox="0 0 16 16"><circle cx="8" cy="8" r="7" fill="#f4c724"/><path d="M8 8L1.600 5A7 7 0 0 1 14.600 5.500H8z" fill="#dd3b2c"/><path d="M8 8L1.500 5.200A7 7 0 0 0 7.500 15l3-5z" fill="#2f9c45"/><circle cx="8" cy="8" r="3.200" fill="#3f7fe0" stroke="#fff"/></svg></button>
        <button aria-label="Download Master"><svg width="16" height="16" viewBox="0 0 16 16"><path d="M1 1l5 3 2-3 2 3 5-3-3 5 3 2-3 2 3 5-5-3-2 3-2-3-5 3 3-5-3-2 3-2z" fill="#dfe7f2" stroke="#2c3a5c" stroke-width=".8"/><path d="M1 1l4 4M15 1l-4 4M1 15l4-4M15 15l-4-4" stroke="#a8502c" stroke-width="1.300"/><circle cx="8" cy="8" r="3.500" fill="#dbe6f6"/></svg></button>
        <button aria-label="Nero"><svg width="16" height="16" viewBox="0 0 16 16"><circle cx="8" cy="8" r="7.300" fill="#8d1508" stroke="#f2ece6" stroke-width="1.200"/><path d="M1.500 9.500h13c-1 6-12 6-13 0z" fill="#f3f3f0"/><path d="M4 9c0-4 3-3 4-6 2 2 4 2 4 6z" fill="#f0742b"/><path d="M5 11h6" stroke="#b99"/></svg></button>
        <button class="more" aria-label="Ещё"><svg width="9" height="6" fill="none" stroke="#b8d3ff" stroke-width="1.200"><path d="M1 0l3 3-3 3M5 0l3 3-3 3"/></svg></button>
      </div>
      <div class="tasks">${tasks.map(([ic, t], i) => html`<button class=${classMap({ task: true, on: i === 6 })}>${ic}<span>${t}</span></button>`)}</div>
      <div class="tray">
        <button class="hide" aria-label="Показать значки"><svg width="18" height="18" viewBox="0 0 18 18"><circle cx="9" cy="9" r="8.300" fill="#2f8ae8" stroke="#cfe6ff"/><path d="M10.500 5L6.500 9l4 4" fill="none" stroke="#fff" stroke-width="2"/></svg></button>
        <svg width="14" height="16" viewBox="0 0 14 16"><path d="M3 11l8-4 3 3-8 5z" fill="#4b5768" stroke="#ccd5e0" stroke-width=".8"/><path d="M1 4l5-4v2c3 0 4 2 3 6-1-2-2-2-3-2v2z" fill="#42c034" stroke="#19721a" stroke-width=".6"/></svg>
        <svg width="15" height="12" viewBox="0 0 15 12"><path d="M0 1h15v10H0z" fill="#f3dcdc"/><path d="M0 1.700h15M0 4.500h15M0 7.300h15M0 10.200h15" stroke="#cf3038" stroke-width="1.400"/><path d="M0 1h7v5H0z" fill="#33498f"/></svg>
        <span class="clock">17:55</span>
      </div>`;
  }
}

/* ---------- application window ---------- */

@customElement("app-root")
export class AppRoot extends LitElement {
  static styles = [reset, css`
    :host { display: flex; flex-direction: column; height: 100vh; overflow: hidden; background: #bfdbff; }
    .bar { display: flex; height: 22px; margin-top: 1px; flex: none; border: solid #5a84b4; border-width: 1px 0; background: #fff; font: 13px/20px ${cellFont}; color: #000; }
    .namebox { width: 140px; text-align: center; }
    .drop { width: 18px; }
    .gap { width: 1px; }
    .fx { width: 85px; justify-content: space-between; padding: 0 6px; border: 1px solid #7a9bc6; border-width: 0 1px 0 1px; border-radius: 10px 0 0 10px; background: linear-gradient(#e9f2fc, #b3cbea); }
    .bead { width: 8px; height: 8px; border-radius: 50%; background: linear-gradient(135deg, #96a7bf, #fff); }
    .fxt { font: italic bold 15px/18px "Liberation Serif", serif; color: #545c68; }
    .fxt sub { font-size: 12px; line-height: 1px; vertical-align: -1px; }
    .formula { flex: 1; min-width: 0; padding: 0 4px; }
    .more { width: 16px; border-left: 1px solid #5a84b4; background: linear-gradient(#eaf2fb, #b5cdec); }
    .strip { height: 4px; flex: none; background: #dce9f8; border-bottom: 1px solid #6a93c4; }
    .sheet { flex: 1; }
    .status { height: 22px; flex: none; display: flex; align-items: center; font: 11px/14px ${sysFont}; color: #15305f;
      background: linear-gradient(#d7e6f9, #c6dcf8 7px, #b9d4f6 8px, #e1edfb 20px, #5e8ecb); }
    .ready { width: 52px; padding: 0 0 2px 7px; border-right: 1px solid #f0f7ff; align-self: stretch; display: flex; align-items: center; }
    .grow { flex: 1; border-right: 1px solid #7f9fce; align-self: stretch; }
    .right { display: flex; align-items: center; align-self: stretch; padding: 0 4px 2px 4px; background: linear-gradient(#a9c6ec, #82a8dc 8px, #9dbfe9 20px, #5e8ecb); }
    .views { display: flex; border: 1px solid #6b8ec2; border-radius: 2px; height: 18px; background: #bcd1ef; }
    .views button { width: 18px; }
    .views .on { background: linear-gradient(#fcdf9c, #fbc252); }
    .pct { width: 43px; padding-left: 7px; }
    .round { width: 17px; }
    .zoom { appearance: none; width: 101px; height: 16px; background: linear-gradient(#49699c, #49699c) center / 100% 1px no-repeat; }
    .zoom::-webkit-slider-thumb { appearance: none; width: 9px; height: 14px; background: linear-gradient(90deg, #3f5f93 1px, #e3edfa 1px 4px, #7b97c4 4px 5px, #e3edfa 5px 8px, #3f5f93 8px); border-top: 1px solid #3f5f93; clip-path: polygon(0 0, 100% 0, 100% 65%, 50% 100%, 0 65%); }
  `];

  render() {
    return html`
      <excel-ribbon></excel-ribbon>
      <div class="bar">
        <input class="namebox" aria-label="Имя" .value=${"G25"}>
        <button class="drop" aria-label="Список имён"><svg width="8" height="4"><path d="M0 0h8L4 4z"/></svg></button>
        <span class="gap"></span>
        <button class="fx" aria-label="Вставить функцию"><span class="bead"></span><span class="fxt">f<sub>x</sub></span></button>
        <input class="formula" aria-label="Строка формул">
        <button class="more" aria-label="Развернуть"><svg width="7" height="9" fill="none" stroke="#000" stroke-width="1.500"><path d="M.5.5l3 3 3-3M.5 4.500l3 3 3-3"/></svg></button>
      </div>
      <div class="strip"></div>
      <excel-sheet class="sheet"></excel-sheet>
      <div class="status">
        <span class="ready">Готово</span><span class="grow"></span>
        <div class="right">
          <div class="views">
            <button class="on" aria-label="Обычный"><svg width="12" height="10" fill="#fff" stroke="#666"><path d="M.5.5h11v9H.5zM.5 3.500h11M.5 6.500h11M4 .5v9M8 .5v9"/></svg></button>
            <button aria-label="Разметка"><svg width="12" height="12" fill="#fff" stroke="#666"><path d="M.5.5h11v11H.5z" fill="#aaa"/><path d="M3 2.500h6v8H3zM4.500 4.500h3M4.500 6.500h3M4.500 8.500h3"/></svg></button>
            <button aria-label="Страничный"><svg width="12" height="12" fill="#fff" stroke="#666"><path d="M.5.5h11v11H.5z" fill="#aaa"/><path d="M2 .5h4v6H2zM6 .5h4v6H6z"/></svg></button>
          </div>
          <label class="pct" for="zoom">100%</label>
          <button class="round" aria-label="Мельче"><svg width="17" height="17"><circle cx="8.500" cy="8.500" r="7.500" fill="#dbe8f8" stroke="#4d6c9f"/><path d="M4.500 8.500h8" stroke="#3c4c68" stroke-width="2.500"/></svg></button>
          <input id="zoom" class="zoom" type="range" min="0" max="100" value="50">
          <button class="round" aria-label="Крупнее"><svg width="17" height="17"><circle cx="8.500" cy="8.500" r="7.500" fill="#dbe8f8" stroke="#4d6c9f"/><path d="M4.500 8.500h8M8.500 4.500v8" stroke="#3c4c68" stroke-width="2.500"/></svg></button>
        </div>
      </div>
      <xp-taskbar></xp-taskbar>`;
  }
}
